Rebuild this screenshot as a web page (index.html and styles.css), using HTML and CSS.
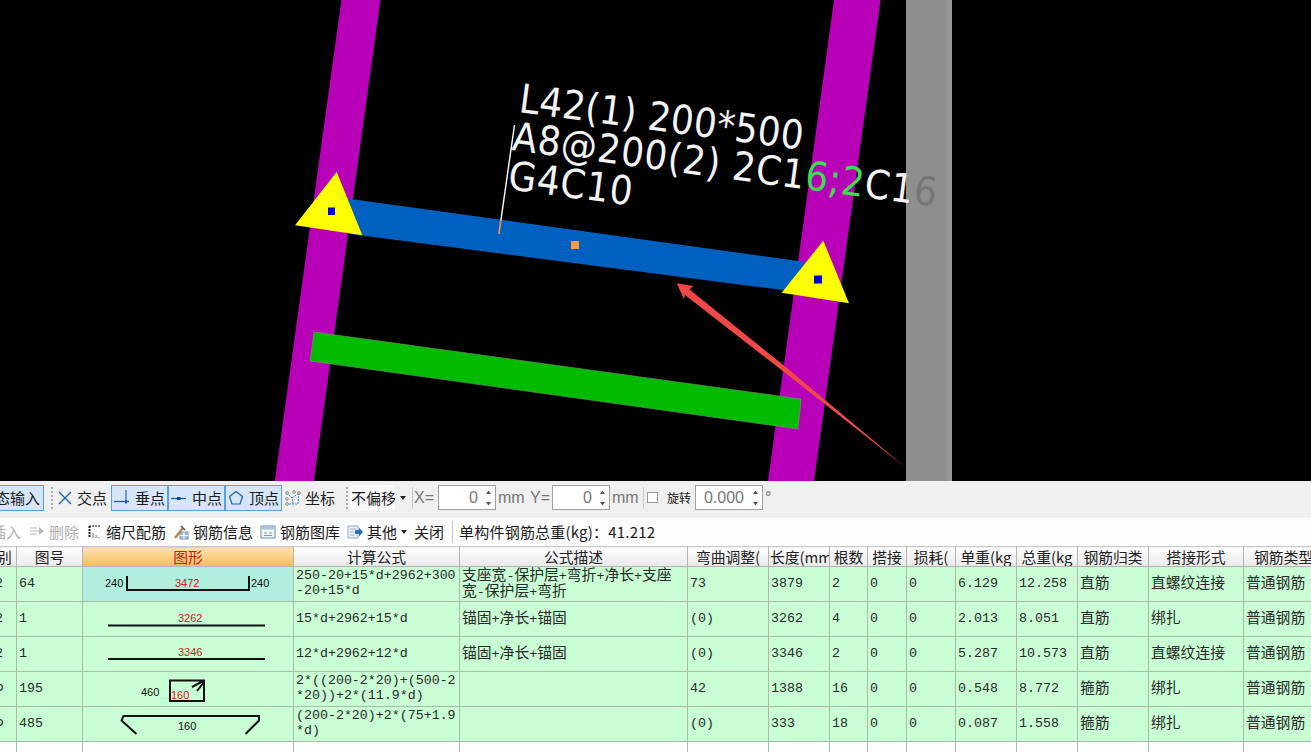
FILE: index.html
```html
<!DOCTYPE html>
<html lang="zh">
<head>
<meta charset="utf-8">
<title>钢筋编辑</title>
<link rel="stylesheet" href="styles.css">
</head>
<body>
<div class="canvas">
<svg class="scene" width="1311" height="481" viewBox="0 0 1311 481">
<polygon fill="#b800b8" points="341.4,0 380.4,0 313.8,481 274.8,481"/>
<polygon fill="#b800b8" points="834,0 880.5,0 814,481 768,481"/>
<rect x="906" y="0" width="41" height="481" fill="#8e8e8e"/>
<rect x="947" y="0" width="5" height="481" fill="#969696"/>
<polygon fill="#0060c0" points="340,197.5 805,262 790,291 350,234"/>
<polygon fill="#00bb00" stroke="#7a9a7a" stroke-width="0.6" points="314,332 801,399 798,429 310,361"/>
<polygon fill="#ffff00" points="336.7,172 295,225.3 362.3,235.3"/>
<polygon fill="#ffff00" points="823.3,240.7 781.7,292.7 849,303.3"/>
<rect x="328" y="207.5" width="7" height="7.5" fill="#0000e0"/>
<rect x="814" y="275.5" width="8" height="8" fill="#0000e0"/>
<rect x="571" y="241" width="8" height="8" fill="#f79a45"/>
<line x1="514.5" y1="125" x2="500.8" y2="221" stroke="#fff" stroke-width="1.4"/>
<line x1="500.8" y1="220" x2="499" y2="234" stroke="#f79a45" stroke-width="1.6"/>
<g class="label">
<text class="line-a" transform="translate(518 112) rotate(7.6)">L42(1) 200*500</text>
<text class="line-b" transform="translate(511 150) rotate(7.6)">A8@200(2) 2C1<tspan class="on-col">6;2</tspan>C1<tspan class="on-grey">6</tspan></text>
<text class="line-b" transform="translate(507 189) rotate(7.6)">G4C10</text>
</g>
<polygon fill="#f04848" points="676.700,283.300 693.300,286 689.500,289.500 784.500,366 905,467 781.500,370 685,295 684,299.300"/>
</svg>
</div>

<div class="bar bar-top">
<div class="tool boxed first"><span>动态输入</span></div>
<i class="dots"></i>
<div class="tool tool-x"><svg class="ico" viewBox="0 0 16 16"><path d="M2 2 14 14M14 2 2 14" stroke="#1c5ea8" stroke-width="1.3" fill="none"/></svg><span>交点</span></div>
<div class="tool boxed"><svg class="ico" viewBox="0 0 16 16"><path d="M0 11.500H15" stroke="#1c5ea8" stroke-width="1.3"/><path d="M12 0V14" stroke="#1c5ea8" stroke-width="1.1"/><rect x="11" y="10.500" width="2" height="2" fill="#123f80"/></svg><span>垂点</span></div>
<div class="tool boxed"><svg class="ico" viewBox="0 0 16 16"><path d="M0 8.500H15" stroke="#1c5ea8" stroke-width="1.3"/><rect x="6" y="7" width="3.500" height="3" fill="#123f80"/></svg><span>中点</span></div>
<div class="tool boxed"><svg class="ico" viewBox="0 0 16 16"><path d="M8 1.500 14.500 6.500 12 14H4L1.500 6.500Z" stroke="#1c5ea8" stroke-width="1.200" fill="none"/></svg><span>顶点</span></div>
<div class="tool tool-xy"><svg class="ico" viewBox="0 0 16 16"><path d="M1 14H13L14 3M8 14 7 8 2 3M7 8 14 3" stroke="#2f8fc0" stroke-width="1" fill="none" stroke-dasharray="2 1"/><g fill="#fff" stroke="#555" stroke-width=".7"><circle cx="2" cy="3" r="1.300"/><circle cx="14" cy="3" r="1.300"/><circle cx="2" cy="9" r="1.300"/><circle cx="2" cy="14" r="1.300"/><circle cx="9" cy="2" r="1.300"/></g></svg><span>坐标</span></div>
<i class="dots dots-wide"></i>
<div class="select"><span class="select-val">不偏移</span><b class="caret"></b></div>
<i class="sep sep-x"></i>
<span class="num-label w-x">X=</span>
<div class="spin"><span>0</span><svg class="arrows" width="7" height="18" viewBox="0 0 7 18"><path d="M3.500 1.500 6 5H1ZM3.500 16.500 6 13H1Z" fill="#555"/></svg></div>
<span class="num-label unit">mm</span>
<span class="num-label w-y">Y=</span>
<div class="spin"><span>0</span><svg class="arrows" width="7" height="18" viewBox="0 0 7 18"><path d="M3.500 1.500 6 5H1ZM3.500 16.500 6 13H1Z" fill="#555"/></svg></div>
<span class="num-label unit">mm</span>
<i class="sep sep-sm"></i>
<i class="check"></i>
<span class="rot-label">旋转</span>
<div class="spin spin-rot"><span>0.000</span><svg class="arrows" width="7" height="18" viewBox="0 0 7 18"><path d="M3.500 1.500 6 5H1ZM3.500 16.500 6 13H1Z" fill="#555"/></svg></div>
<span class="num-label deg">°</span>
</div>

<div class="bar bar-sub">
<div class="act act-first off"><span>插入</span></div>
<div class="act act-del off"><svg class="ico" viewBox="0 0 16 16"><path d="M1 4H8M1 7H10M1 10H8" stroke="#bbb" stroke-width="1.200"/><path d="M10 3 15 7 10 11Z" fill="#bbb"/></svg><span>删除</span></div>
<div class="act act-scale"><svg class="ico ico-sm" viewBox="0 0 14 14"><path d="M1 1H13" stroke="#222" stroke-width="1.200" stroke-dasharray="2 1" fill="none"/><path d="M1.500 1V13" stroke="#222" stroke-width="2" stroke-dasharray="2 1"/><path d="M5 8V13M8 10V13M11 12V13" stroke="#777" stroke-width="1"/></svg><span>缩尺配筋</span></div>
<div class="act"><svg class="ico" viewBox="0 0 16 16"><rect x="7" y="8" width="8" height="7" fill="#a9bedd" stroke="#7c96bd"/><path d="M11 8V15M7 11.500H15" stroke="#fff"/><path d="M2 14 10 4" stroke="#b08a48" stroke-width="2.400"/><path d="M8 2 12 6" stroke="#555" stroke-width="1.400"/></svg><span>钢筋信息</span></div>
<div class="act"><svg class="ico" viewBox="0 0 16 16"><rect x="1" y="2" width="14" height="12" fill="#f4f7fb" stroke="#6f8db6"/><rect x="1.500" y="2.500" width="13" height="3" fill="#a8c2e2"/><path d="M4 9H7M9 9H12M4 11.500H12" stroke="#7f9abd"/></svg><span>钢筋图库</span></div>
<div class="act"><svg class="ico" viewBox="0 0 16 16"><rect x="1" y="2" width="10" height="12" fill="#eef3fa" stroke="#9aaec8"/><path d="M3 5H9M3 8H7M3 11H7" stroke="#9aaec8"/><path d="M8 6H12V3.500L16 8 12 12.500V10H8Z" fill="#2e6fc2"/></svg><span>其他</span><b class="caret caret-sm"></b></div>
<div class="act"><span>关闭</span></div>
<i class="sep sep-sub"></i>
<span class="total">单构件钢筋总重(kg)：41.212</span>
</div>

<div class="grid-wrap">
<table class="grid">
<colgroup>
<col class="c0"><col class="c1"><col class="c2"><col class="c3"><col class="c4"><col class="c5"><col class="c6"><col class="c7"><col class="c8"><col class="c9"><col class="c10"><col class="c11"><col class="c12"><col class="c13"><col class="c14">
</colgroup>
<thead>
<tr>
<th>级别</th><th>图号</th><th class="sel">图形</th><th>计算公式</th><th>公式描述</th><th>弯曲调整(</th><th>长度(mm</th><th>根数</th><th>搭接</th><th>损耗(</th><th>单重(kg</th><th>总重(kg</th><th>钢筋归类</th><th>搭接形式</th><th>钢筋类型</th>
</tr>
</thead>
<tbody>
<tr class="r1">
<td class="lvl">2</td><td>64</td>
<td class="fig picked"><svg width="211" height="34" viewBox="0 0 211 34"><path class="rebar" d="M44 9V23H166V9"/><text class="dim" x="22" y="20">240</text><text class="dim-red" x="92" y="20">3472</text><text class="dim" x="168" y="20">240</text></svg></td>
<td>250-20+15*d+2962+300<br>-20+15*d</td>
<td class="tight"><span class="z">支座宽</span>-<span class="z">保护层</span>+<span class="z">弯折</span>+<span class="z">净长</span>+<span class="z">支座</span><br><span class="z">宽</span>-<span class="z">保护层</span>+<span class="z">弯折</span></td>
<td>73</td><td>3879</td><td>2</td><td>0</td><td>0</td><td>6.129</td><td>12.258</td>
<td class="tight"><span class="z">直筋</span></td><td class="tight"><span class="z">直螺纹连接</span></td><td class="tight"><span class="z">普通钢筋</span></td>
</tr>
<tr class="r2">
<td class="lvl">2</td><td>1</td>
<td class="fig"><svg width="211" height="34" viewBox="0 0 211 34"><path class="rebar" d="M25 23.500H182"/><text class="dim-red" x="95" y="20">3262</text></svg></td>
<td>15*d+2962+15*d</td>
<td class="tight"><span class="z">锚固</span>+<span class="z">净长</span>+<span class="z">锚固</span></td>
<td>(0)</td><td>3262</td><td>4</td><td>0</td><td>0</td><td>2.013</td><td>8.051</td>
<td class="tight"><span class="z">直筋</span></td><td class="tight"><span class="z">绑扎</span></td><td class="tight"><span class="z">普通钢筋</span></td>
</tr>
<tr class="r3">
<td class="lvl">2</td><td>1</td>
<td class="fig"><svg width="211" height="34" viewBox="0 0 211 34"><path class="rebar" d="M25 22H182"/><text class="dim-red" x="95" y="19">3346</text></svg></td>
<td>12*d+2962+12*d</td>
<td class="tight"><span class="z">锚固</span>+<span class="z">净长</span>+<span class="z">锚固</span></td>
<td>(0)</td><td>3346</td><td>2</td><td>0</td><td>0</td><td>5.287</td><td>10.573</td>
<td class="tight"><span class="z">直筋</span></td><td class="tight"><span class="z">直螺纹连接</span></td><td class="tight"><span class="z">普通钢筋</span></td>
</tr>
<tr class="r4">
<td class="lvl">Φ</td><td>195</td>
<td class="fig"><svg width="211" height="34" viewBox="0 0 211 34"><path class="rebar" d="M87 8.500H121V29H87ZM109 15 121 8.500M114 19 121 10"/><text class="dim" x="58" y="23.500">460</text><text class="dim-red" x="88" y="26.500">160</text></svg></td>
<td>2*((200-2*20)+(500-2<br>*20))+2*(11.9*d)</td>
<td></td>
<td>42</td><td>1388</td><td>16</td><td>0</td><td>0</td><td>0.548</td><td>8.772</td>
<td class="tight"><span class="z">箍筋</span></td><td class="tight"><span class="z">绑扎</span></td><td class="tight"><span class="z">普通钢筋</span></td>
</tr>
<tr class="r5">
<td class="lvl">Φ</td><td>485</td>
<td class="fig"><svg width="211" height="34" viewBox="0 0 211 34"><path class="rebar" d="M53.500 27 38.500 13.500 40.500 9H176V13.500L162.500 27"/><text class="dim" x="95" y="23">160</text></svg></td>
<td>(200-2*20)+2*(75+1.9<br>*d)</td>
<td></td>
<td>(0)</td><td>333</td><td>18</td><td>0</td><td>0</td><td>0.087</td><td>1.558</td>
<td class="tight"><span class="z">箍筋</span></td><td class="tight"><span class="z">绑扎</span></td><td class="tight"><span class="z">普通钢筋</span></td>
</tr>
<tr class="r6"><td></td><td></td><td></td><td></td><td></td><td></td><td></td><td></td><td></td><td></td><td></td><td></td><td></td><td></td><td></td></tr>
</tbody>
</table>
</div>
</body>
</html>
```

FILE: styles.css
```css
* { box-sizing: border-box; }
html, body { margin: 0; padding: 0; }
body {
  width: 1311px;
  height: 752px;
  overflow: hidden;
  background: #fff;
  font-family: "Noto Sans CJK SC", sans-serif;
  color: #1a1a1a;
}
.canvas { height: 481px; background: #000; }
.scene { display: block; }
.label text {
  font-family: "DejaVu Sans", sans-serif;
  font-stretch: condensed;
  font-size: 40px;
  fill: #f4f4f4;
}
.label .line-a { letter-spacing: .2px; }
.label .line-b { letter-spacing: .75px; }
.label .on-col { fill: #3fdc4c; }
.label .on-grey { fill: #767676; }

.bar { display: flex; align-items: center; font-size: 15px; line-height: 20px; white-space: nowrap; overflow: hidden; }
.bar-top { height: 37px; background: #f0f0f0; padding-bottom: 4px; }
.bar-sub { height: 28px; background: #fdfdfd; }

.tool { display: flex; align-items: center; gap: 4px; height: 26px; padding: 0 0 0 2px; border: 1px solid transparent; flex: none; }
.tool-x { width: 55px; padding-left: 0; }
.tool-xy { width: 54px; padding-left: 2px; }
.boxed { background: #d4e6f8; border-color: #5a9fe0; gap: 5px; }
.tool.boxed { width: 57px; }
.tool.first { width: 65px; margin-left: -21px; padding-left: 0; }
.dots { width: 2px; height: 22px; border-left: 2px dotted #aaa; margin: 0 3px 0 7px; flex: none; }
.dots-wide { margin: 0 2px 0 10px; }
.ico { width: 16px; height: 16px; flex: none; }
.ico-sm { width: 14px; height: 14px; }

.select { display: flex; align-items: center; width: 61px; height: 26px; flex: none; }
.select-val { width: 45px; background: #fafafa; overflow: hidden; padding-left: 1px; line-height: 26px; height: 26px; flex: none; }
.caret { width: 0; height: 0; margin-left: 5px; border: 3px solid transparent; border-top: 4px solid #222; border-bottom: 0; flex: none; }
.caret-sm { margin-left: 0; }
.sep { width: 1px; height: 22px; background: #c8c8c8; flex: none; }
.sep-x { margin: 0 1px; }
.num-label { color: #777; font-family: "Liberation Sans", sans-serif; font-size: 16px; flex: none; }
.w-x { width: 24px; }
.w-y { width: 27px; text-align: right; padding-right: 2px; }
.unit { width: 27px; margin-left: 2px; }
.spin {
  display: flex; align-items: center; justify-content: flex-end; gap: 7px;
  width: 58px; height: 25px; padding-right: 3px;
  background: #fff; border: 1px solid #a0a0a0; color: #777;
  font-family: "Liberation Sans", sans-serif; font-size: 16px; flex: none;
}
.sep-sm { margin: 0 3px 0 4px; }
.check { width: 11px; height: 11px; border: 1px solid #999; background: #fff; flex: none; }
.rot-label { font-size: 12px; margin: 0 4px 0 9px; width: 24px; flex: none; }
.spin-rot { width: 68px; gap: 8px; }
.deg { margin-left: 2px; }

.act { display: flex; align-items: center; gap: 4px; margin-left: 7px; flex: none; }
.act-first { margin-left: -9px; width: 30px; justify-content: flex-end; }
.act-del { margin-left: 8px; }
.act-scale { margin-left: 9px; }
.off { color: #b0b0b0; }
.sep-sub { margin: 0 6px 0 8px; }
.total { font-size: 15px; letter-spacing: .2px; }

.grid-wrap { overflow: hidden; height: 206px; }
.grid {
  margin-left: -23px;
  width: 1346px;
  border-collapse: collapse;
  table-layout: fixed;
  font-family: "Liberation Mono", "Noto Sans CJK SC", monospace;
  font-size: 13.3px;
  line-height: 15px;
  color: #2a2a2a;
}
.c0 { width: 39px; } .c1 { width: 66px; } .c2 { width: 211px; } .c3 { width: 166px; } .c4 { width: 228px; }
.c5 { width: 81px; } .c6 { width: 61px; } .c7 { width: 38px; } .c8 { width: 39px; } .c9 { width: 49px; }
.c10 { width: 61px; } .c11 { width: 61px; } .c12 { width: 71px; } .c13 { width: 95px; } .c14 { width: 80px; }

.grid th {
  height: 20px; padding: 0 1px;
  background: linear-gradient(#fefefe, #e9e9e9);
  border: 1px solid #b4b4b4; border-top-color: #c8c8c8;
  font-family: "Noto Sans CJK SC", sans-serif;
  font-weight: 400; font-size: 14.8px; line-height: 18px;
  overflow: hidden; white-space: nowrap;
  color: #222;
}
.grid th.sel { background: linear-gradient(#fde3ac, #f6bd5c); color: #c0201c; }
.grid td {
  padding: 0 2px 2px;
  background: #c9fdd3;
  border: 1px solid #a9bdab;
  overflow: hidden; white-space: nowrap;
  vertical-align: middle;
}
.grid tr.r1 td { height: 34px; padding-bottom: 2px; }
.grid tr.r2 td, .grid tr.r3 td, .grid tr.r4 td, .grid tr.r5 td { height: 35px; }
.grid tr.r6 td { height: 12px; background: #fff; padding: 0; }
.grid td.lvl { text-align: right; padding-right: 13px; }
.grid tr td.fig { padding: 0; line-height: 0; }
.grid tr td.picked { background: #b1eedd; }
.z { font-family: "Noto Sans CJK SC", sans-serif; font-size: 14.8px; line-height: 13px; }
.grid td.tight { line-height: 13px; }
.rebar { fill: none; stroke: #111; stroke-width: 2; }
.dim, .dim-red { font-family: "Liberation Sans", sans-serif; font-size: 11px; }
.dim { fill: #111; }
.dim-red { fill: #d01818; }
```
